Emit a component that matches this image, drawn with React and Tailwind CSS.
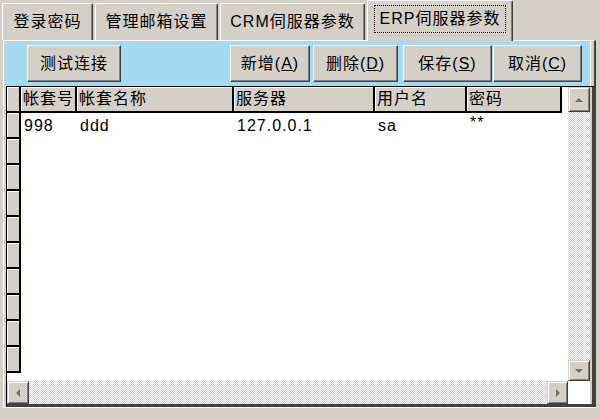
import React from "react";

function Tab({ w, children }) {
  return (
    <div
      className={`${w} h-[37px] bg-[#d4d0c8] border-t border-l border-white border-r border-r-[#404040] shadow-[inset_-1px_0_#808080] rounded-tl-[2px] rounded-tr-[2px] flex items-center justify-center`}
    >
      <span>{children}</span>
    </div>
  );
}

function ActiveTab({ children }) {
  return (
    <div className="relative z-10 -mb-px w-[146px] h-[41px] bg-[#d4d0c8] border-t border-l border-white border-r border-r-[#404040] shadow-[inset_-1px_0_#808080] rounded-tl-[2px] rounded-tr-[2px] flex items-start justify-center pt-[4px]">
      <span className="border border-dotted border-black h-[28px] w-[132px] flex items-center justify-center">
        {children}
      </span>
    </div>
  );
}

function Btn({ w, ml, children }) {
  return (
    <div
      className={`${w} ${ml} h-[37px] bg-[#d4d0c8] border border-t-white border-l-white border-r-[#404040] border-b-[#404040] shadow-[inset_-1px_-1px_#808080] flex items-center justify-center`}
    >
      {children}
    </div>
  );
}

function ScrollBtn({ w, h, dir }) {
  const pts = {
    up: "1,6 5,2 9,6",
    down: "1,2 5,6 9,2",
    left: "6,1 2,5 6,9",
    right: "2,1 6,5 2,9",
  }[dir];
  const vb = dir === "up" || dir === "down" ? "0 0 10 8" : "0 0 8 10";
  const sz = dir === "up" || dir === "down" ? "w-[10px] h-[8px]" : "w-[8px] h-[10px]";
  return (
    <div
      className={`${w} ${h} shrink-0 bg-[#d4d0c8] border border-t-[#d4d0c8] border-l-[#d4d0c8] border-r-[#404040] border-b-[#404040] shadow-[inset_1px_1px_#ffffff,inset_-1px_-1px_#808080] flex items-center justify-center`}
    >
      <svg viewBox={vb} className={sz}>
        <polygon points={pts} fill="#6e6e6e" />
      </svg>
    </div>
  );
}

const cols = [
  ["帐套号", "w-[56px]", "998", ""],
  ["帐套名称", "w-[157px]", "ddd", ""],
  ["服务器", "w-[141px]", "127.0.0.1", ""],
  ["用户名", "w-[92px]", "sa", ""],
  ["密码", "w-[95px]", "**", "pb-[7px]"],
];

const track =
  "bg-[repeating-conic-gradient(#d4d0c8_0%_25%,#ffffff_0%_50%)] bg-[length:2px_2px]";

export default function App() {
  const rows = Array.from({ length: 11 });
  return (
    <div className="w-[600px] h-[419px] bg-[#d4d0c8] overflow-hidden font-[family-name:'Liberation_Sans','Noto_Sans_CJK_SC',sans-serif] text-[16px] tracking-[1px] text-black leading-none">
      <div className="flex items-end h-[40px] pl-[2px] gap-[2px]">
        <Tab w="w-[91px]">登录密码</Tab>
        <Tab w="w-[123px]">管理邮箱设置</Tab>
        <Tab w="w-[145px]">CRM伺服器参数</Tab>
        <ActiveTab>ERP伺服器参数</ActiveTab>
      </div>

      <div className="ml-[3px] w-[593px] h-[367px] border-t border-l border-white border-r-2 border-r-[#404040] flex flex-col">
        <div className="ml-px w-[586px] h-[45px] shrink-0 bg-[#a6daf0] border-r border-white flex items-start pt-[4px]">
          <Btn w="w-[94px]" ml="ml-[22px]">测试连接</Btn>
          <Btn w="w-[80px]" ml="ml-[109px]">
            新增(<u>A</u>)
          </Btn>
          <Btn w="w-[85px]" ml="ml-[3px]">
            删除(<u>D</u>)
          </Btn>
          <Btn w="w-[89px]" ml="ml-[5px]">
            保存(<u>S</u>)
          </Btn>
          <Btn w="w-[89px]" ml="ml-px">
            取消(<u>C</u>)
          </Btn>
        </div>

        <div className="ml-[2px] w-[588px] h-[321px] shrink-0 border-l border-t border-black border-r-2 border-r-[#404040] border-b-[3px] border-b-[#404040] bg-[#d4d0c8] flex flex-col">
          <div className="flex h-[294px]">
            <div className="w-[561px] h-[294px] bg-white flex overflow-hidden">
              <div className="w-[14px] shrink-0 flex flex-col">
                {rows.map((_, i) => (
                  <div
                    key={i}
                    className="h-[26px] shrink-0 bg-[#d4d0c8] border-r-2 border-b-2 border-black shadow-[inset_1px_1px_#ffffff]"
                  />
                ))}
              </div>
              {cols.map(([h, w, v, extra]) => (
                <div key={h} className={`${w} shrink-0 flex flex-col`}>
                  <div className="h-[26px] bg-[#d4d0c8] border-r-2 border-b-2 border-black shadow-[inset_1px_1px_#ffffff] flex items-center pl-[2px] whitespace-nowrap">
                    {h}
                  </div>
                  <div className={`h-[26px] flex items-center pl-[3px] whitespace-nowrap ${extra}`}>
                    {v}
                  </div>
                </div>
              ))}
            </div>
            <div className="w-[22px] flex flex-col">
              <ScrollBtn w="w-[22px]" h="h-[25px]" dir="up" />
              <div className={`flex-1 ${track}`} />
              <ScrollBtn w="w-[22px]" h="h-[21px]" dir="down" />
            </div>
          </div>
          <div className="flex h-[23px]">
            <ScrollBtn w="w-[22px]" h="h-[23px]" dir="left" />
            <div className={`w-[518px] h-[23px] ${track}`} />
            <ScrollBtn w="w-[21px]" h="h-[23px]" dir="right" />
            <div className="w-[22px] h-[23px] bg-white" />
          </div>
        </div>
      </div>
      <div className="h-px bg-white ml-[3px] w-[593px]" />
    </div>
  );
}
